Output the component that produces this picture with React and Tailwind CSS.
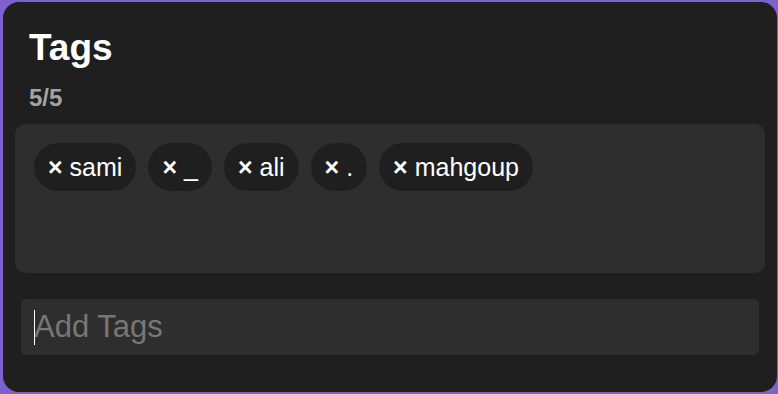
import { useState } from 'react';

const App = () => {
    const [tags] = useState(['sami', '_', 'ali', '.', 'mahgoup']);

    return (
        <div className="h-[394px] w-full bg-[#7d62cf] pl-[3px] pr-[1px] pt-[2px] pb-[2px] font-['Liberation_Sans',Arial,sans-serif]">
            <div className="h-full rounded-[16px] bg-[#1f1f1f] pt-[25px]">
                <h1 className="ml-[26px] text-[37px] leading-[42px] font-bold text-white">Tags</h1>
                <div className="ml-[26px] mt-[15px] text-[24px] leading-[28px] font-bold text-[#a3a3a3]">
                    {tags.length}/5
                </div>

                <div className="mx-[12px] mt-[12px] h-[149px] rounded-[10px] bg-[#2e2e2e] p-[19px]">
                    <div className="flex flex-wrap gap-[12px]">
                        {tags.map((tag) => (
                            <div
                                key={tag}
                                className="flex h-[48px] items-center rounded-full bg-[#1f1f1f] px-[14px] text-[25px] leading-[28px] text-white"
                            >
                                <span className="font-bold">×</span>
                                <span className="ml-[7px]">{tag}</span>
                            </div>
                        ))}
                    </div>
                </div>

                <div className="relative mx-[18px] mt-[26px] h-[56px]">
                    <input
                        type="text"
                        placeholder="Add Tags"
                        className="h-full w-full rounded-[5px] bg-[#2e2e2e] px-[13px] text-[31px] text-white outline-none placeholder:text-[#777777]"
                    />
                    <span className="pointer-events-none absolute left-[13px] top-[11px] h-[35px] w-[1px] bg-white" />
                </div>
            </div>
        </div>
    );
};

export default App;
